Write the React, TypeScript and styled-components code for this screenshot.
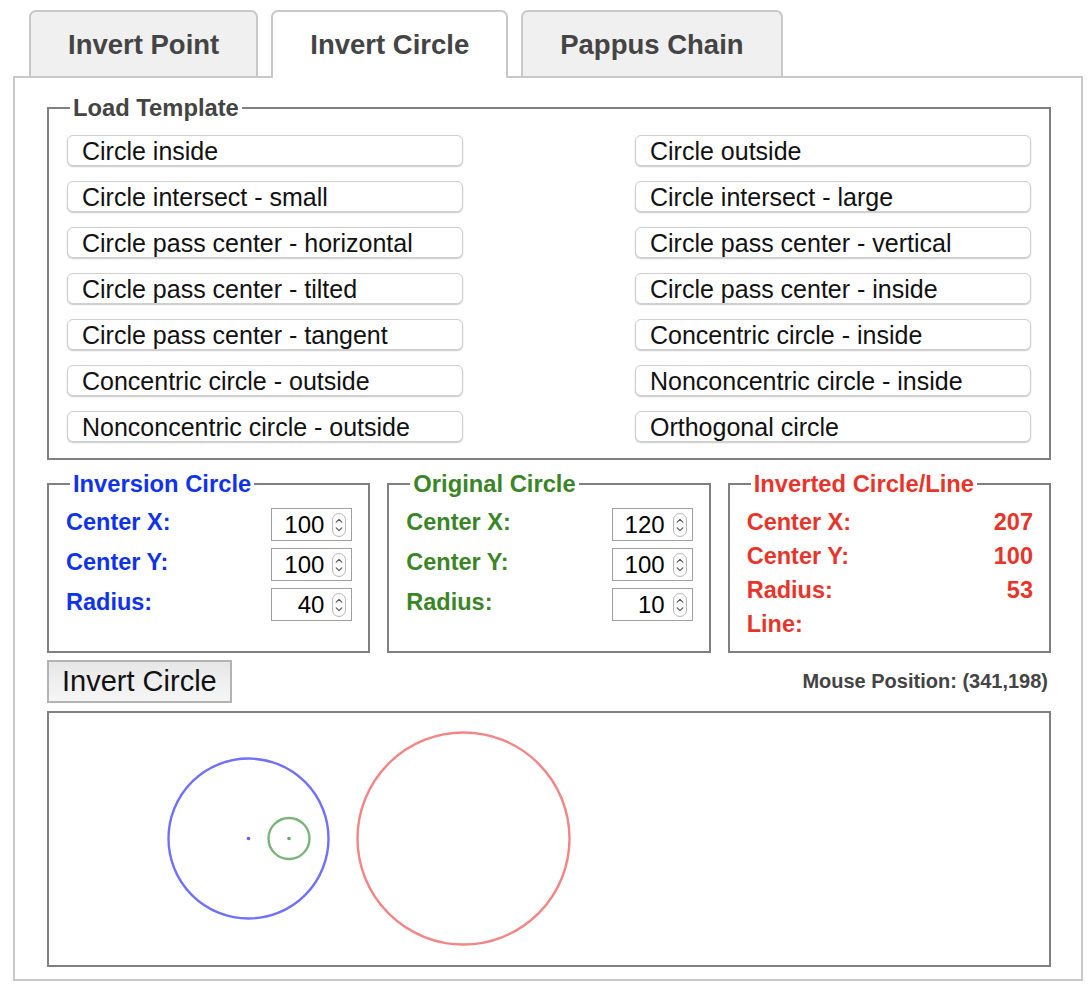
import React from "react";
import styled, { createGlobalStyle } from "styled-components";

const GlobalStyle = createGlobalStyle`
  html, body { margin: 0; padding: 0; background: #ffffff; }
  body { font-family: "Liberation Sans", Arial, Helvetica, sans-serif; }
  * { box-sizing: border-box; }
`;

const Root = styled.div`
  padding: 10px 0 0 13px;
  width: 1092px;
`;

const TabList = styled.div`
  display: flex;
  align-items: flex-end;
  gap: 13px;
  padding-left: 16px;
`;

const Tab = styled.button<{ $active?: boolean }>`
  position: relative;
  z-index: ${(p) => (p.$active ? 2 : 1)};
  height: ${(p) => (p.$active ? "68px" : "66px")};
  margin-bottom: ${(p) => (p.$active ? "-2px" : "0")};
  padding: 1px 37px ${(p) => (p.$active ? "2px" : "0")};
  border: 2px solid #c8c8c8;
  border-bottom: none;
  border-radius: 7px 7px 0 0;
  background: ${(p) => (p.$active ? "#ffffff" : "#f0f0f0")};
  color: #444444;
  font-family: "Liberation Sans", Arial, sans-serif;
  font-weight: bold;
  font-size: 27.5px;
  line-height: 63px;
  cursor: pointer;
`;

const Panel = styled.div`
  width: 1070px;
  border: 2px solid #c8c8c8;
  padding: 16px 30px 12px 32px;
  background: #ffffff;
`;

const FieldSet = styled.fieldset<{ $padLeft: number; $padRight: number; $padTop: number; $padBottom: number }>`
  margin: 0;
  min-width: 0;
  border: 2px solid #808080;
  padding: ${(p) => `${p.$padTop}px ${p.$padRight}px ${p.$padBottom}px ${p.$padLeft}px`};
`;

const Legend = styled.legend<{ $color: string; $offset: number }>`
  margin-left: ${(p) => p.$offset}px;
  padding: 0 3px;
  font-size: 23.75px;
  line-height: 28px;
  font-weight: bold;
  color: ${(p) => p.$color};
`;

const TemplateGrid = styled.div`
  display: grid;
  grid-template-columns: 396px 396px;
  justify-content: space-between;
  row-gap: 15px;
`;

const TemplateButton = styled.button`
  height: 31px;
  padding: 1px 14px 0;
  border: 1px solid #cfcfcf;
  border-radius: 6px;
  background: #ffffff;
  box-shadow: 0 1px 1.5px rgba(0, 0, 0, 0.22);
  text-align: left;
  font-family: "Liberation Sans", Arial, sans-serif;
  font-size: 25px;
  line-height: 28px;
  color: #111111;
  white-space: nowrap;
  cursor: pointer;
`;

const ParamRow = styled.div`
  display: flex;
  gap: 17px;
  margin-top: 10px;
`;

const ParamSet = styled(FieldSet)`
  flex: 1 1 0;
`;

const Row = styled.div<{ $h: number; $color: string }>`
  display: flex;
  justify-content: space-between;
  align-items: flex-start;
  height: ${(p) => p.$h}px;
  color: ${(p) => p.$color};
`;

const Label = styled.span`
  font-size: 23.5px;
  line-height: 28px;
  font-weight: bold;
`;

const NumberBox = styled.label`
  display: flex;
  align-items: center;
  gap: 8px;
  width: 81px;
  height: 33px;
  padding: 0 5px 0 4px;
  border: 1px solid #9f9f9f;
  background: #ffffff;
  svg { flex: 0 0 14px; display: block; }
`;

const NumberInput = styled.input`
  flex: 1 1 auto;
  min-width: 0;
  width: 100%;
  border: none;
  outline: none;
  padding: 0;
  background: transparent;
  text-align: right;
  font-family: "Liberation Sans", Arial, sans-serif;
  font-size: 24px;
  color: #000000;
  -moz-appearance: textfield;
  &::-webkit-inner-spin-button,
  &::-webkit-outer-spin-button {
    -webkit-appearance: none;
    margin: 0;
  }
`;

const ActionRow = styled.div`
  display: flex;
  justify-content: space-between;
  align-items: center;
  margin-top: 7px;
`;

const InvertButton = styled.button`
  height: 43px;
  padding: 0 13px;
  border: 2px solid #b3b3b3;
  background: linear-gradient(#e7e7e7, #f6f6f6);
  font-family: "Liberation Sans", Arial, sans-serif;
  font-size: 29px;
  color: #111111;
  cursor: pointer;
`;

const MouseText = styled.span`
  margin-right: 3px;
  font-size: 20px;
  font-weight: bold;
  color: #444444;
`;

const Canvas = styled.div`
  margin-top: 8px;
  height: 256px;
  border: 2px solid #808080;
  background: #ffffff;
  svg { display: block; }
`;

const Spinner = () => (
  <svg width="14" height="24" viewBox="0 0 14 24">
    <rect x="0.5" y="0.5" width="13" height="23" rx="6.5" fill="#fbfbfb" stroke="#b8b8b8" />
    <path d="M4.2 9.2 L7 6.4 L9.8 9.2" fill="none" stroke="#555" strokeWidth="1.1" strokeLinecap="round" strokeLinejoin="round" />
    <path d="M4.2 14.8 L7 17.6 L9.8 14.8" fill="none" stroke="#555" strokeWidth="1.1" strokeLinecap="round" strokeLinejoin="round" />
  </svg>
);

const NumberField = ({ value }: { value: number }) => (
  <NumberBox>
    <NumberInput type="number" defaultValue={value} />
    <Spinner />
  </NumberBox>
);

const BLUE = "#0f33ea";
const GREEN = "#3b8527";
const RED = "#e8352b";

const templates: [string, string][] = [
  ["Circle inside", "Circle outside"],
  ["Circle intersect - small", "Circle intersect - large"],
  ["Circle pass center - horizontal", "Circle pass center - vertical"],
  ["Circle pass center - tilted", "Circle pass center - inside"],
  ["Circle pass center - tangent", "Concentric circle - inside"],
  ["Concentric circle - outside", "Nonconcentric circle - inside"],
  ["Nonconcentric circle - outside", "Orthogonal circle"],
];

const InputSet = ({
  title,
  color,
  values,
}: {
  title: string;
  color: string;
  values: number[];
}) => {
  const labels = ["Center X:", "Center Y:", "Radius:"];
  return (
    <ParamSet $padTop={10} $padRight={16} $padBottom={7} $padLeft={17}>
      <Legend $color={color} $offset={4}>
        {title}
      </Legend>
      {labels.map((l, i) => (
        <Row key={l} $h={40} $color={color}>
          <Label>{l}</Label>
          <NumberField value={values[i]} />
        </Row>
      ))}
    </ParamSet>
  );
};

export default function App() {
  const results: [string, string][] = [
    ["Center X:", "207"],
    ["Center Y:", "100"],
    ["Radius:", "53"],
    ["Line:", ""],
  ];
  return (
    <Root>
      <GlobalStyle />
      <TabList>
        <Tab>Invert Point</Tab>
        <Tab $active>Invert Circle</Tab>
        <Tab>Pappus Chain</Tab>
      </TabList>
      <Panel>
        <FieldSet $padTop={13} $padRight={18} $padBottom={16} $padLeft={18}>
          <Legend $color="#444444" $offset={3}>
            Load Template
          </Legend>
          <TemplateGrid>
            {templates.flatMap(([a, b]) => [
              <TemplateButton key={a}>{a}</TemplateButton>,
              <TemplateButton key={b}>{b}</TemplateButton>,
            ])}
          </TemplateGrid>
        </FieldSet>

        <ParamRow>
          <InputSet title="Inversion Circle" color={BLUE} values={[100, 100, 40]} />
          <InputSet title="Original Circle" color={GREEN} values={[120, 100, 10]} />
          <ParamSet $padTop={10} $padRight={16} $padBottom={7} $padLeft={17}>
            <Legend $color={RED} $offset={4}>
              Inverted Circle/Line
            </Legend>
            {results.map(([l, v]) => (
              <Row key={l} $h={34} $color={RED}>
                <Label>{l}</Label>
                <Label>{v}</Label>
              </Row>
            ))}
          </ParamSet>
        </ParamRow>

        <ActionRow>
          <InvertButton>Invert Circle</InvertButton>
          <MouseText>Mouse Position: (341,198)</MouseText>
        </ActionRow>

        <Canvas>
          <svg width="1000" height="252" viewBox="0 0 1000 252">
            <circle cx="199.5" cy="125.5" r="80" fill="none" stroke="#7070fc" strokeWidth="2.4" />
            <circle cx="199.5" cy="125.5" r="1.8" fill="#6060fa" />
            <circle cx="240" cy="125.5" r="20.5" fill="none" stroke="#7ab47a" strokeWidth="2.4" />
            <circle cx="240" cy="125.5" r="1.8" fill="#64a864" />
            <circle cx="414.5" cy="125.5" r="106" fill="none" stroke="#f28585" strokeWidth="2.4" />
          </svg>
        </Canvas>
      </Panel>
    </Root>
  );
}
